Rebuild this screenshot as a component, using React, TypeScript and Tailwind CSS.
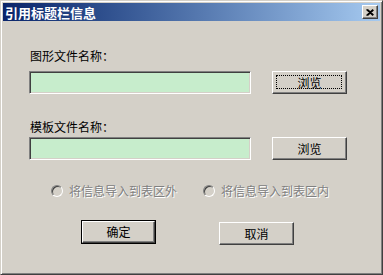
import React from "react";

const font = { fontFamily: '"Noto Sans CJK SC", "Noto Sans", sans-serif' };

function TextBox() {
  return (
    <div className="w-[222px] h-[23px] bg-[#c7edcc] border border-t-[#808080] border-l-[#808080] border-b-white border-r-white shadow-[inset_1px_1px_0_#404040,inset_-1px_-1px_0_#d4d0c8]" />
  );
}

function Button({ label, focused, isDefault }: { label: string; focused?: boolean; isDefault?: boolean }) {
  const inner = (
    <div className="relative w-full h-full bg-[#d4d0c8] border border-t-white border-l-white border-b-[#404040] border-r-[#404040] shadow-[inset_-1px_-1px_0_#808080] flex items-center justify-center text-[12px] text-black leading-none">
      {focused && (
        <div className="absolute left-[3px] top-[3px] right-[4px] bottom-[4px] border border-dotted border-black" />
      )}
      <span>{label}</span>
    </div>
  );
  if (isDefault) {
    return <div className="w-[75px] h-[24px] border border-black">{inner}</div>;
  }
  return <div className="w-[75px] h-[23px]">{inner}</div>;
}

function Radio({ label }: { label: string }) {
  return (
    <div className="flex items-center">
      <div className="w-[12px] h-[12px] rounded-full border border-t-[#808080] border-l-[#808080] border-b-white border-r-white bg-[#d4d0c8] shadow-[inset_1px_1px_0_#404040]" />
      <span className="ml-[6px] text-[12px] leading-[14px] text-[#808080] [text-shadow:1px_1px_0_#ffffff]">
        {label}
      </span>
    </div>
  );
}

export default function App() {
  return (
    <div
      className="w-[383px] h-[275px] bg-[#d4d0c8] border border-t-[#d4d0c8] border-l-[#d4d0c8] border-r-[#404040] border-b-[#404040]"
      style={font}
    >
      <div className="h-full p-[2px] shadow-[inset_1px_1px_0_#ffffff,inset_-1px_-1px_0_#808080] flex flex-col">
        <div className="h-[18px] flex items-center pl-[2px] pr-[2px] bg-gradient-to-r from-[#0a246a] to-[#a6caf0]">
          <span className="text-white font-bold text-[13px] leading-none flex-1">引用标题栏信息</span>
          <div className="w-[16px] h-[14px] bg-[#d4d0c8] border border-t-white border-l-white border-b-[#404040] border-r-[#404040] shadow-[inset_-1px_-1px_0_#808080] flex items-center justify-center">
            <svg width="8" height="7" viewBox="0 0 8 7">
              <path d="M0.5 0.5 L7 6.5 M1.5 0.5 L7.5 6 M7 0.5 L0.5 6.5 M7.5 1 L1.5 6.5" stroke="#000" strokeWidth="1.2" fill="none" />
            </svg>
          </div>
        </div>
        <div className="flex flex-col pl-[26px]">
          <div className="mt-[28px] ml-[1px] text-[12px] leading-[14px] text-black">图形文件名称：</div>
          <div className="mt-[8px] flex items-center">
            <TextBox />
            <div className="ml-[21px]">
              <Button label="浏览" focused />
            </div>
          </div>
          <div className="mt-[26px] ml-[1px] text-[12px] leading-[14px] text-black">模板文件名称：</div>
          <div className="mt-[3px] flex items-center">
            <TextBox />
            <div className="ml-[21px]">
              <Button label="浏览" />
            </div>
          </div>
          <div className="mt-[24px] flex items-center">
            <div className="ml-[22px]">
              <Radio label="将信息导入到表区外" />
            </div>
            <div className="ml-[26px]">
              <Radio label="将信息导入到表区内" />
            </div>
          </div>
          <div className="mt-[22px] flex items-start">
            <div className="ml-[52px]">
              <Button label="确定" isDefault />
            </div>
            <div className="ml-[63px] mt-[2px]">
              <Button label="取消" />
            </div>
          </div>
        </div>
      </div>
    </div>
  );
}
